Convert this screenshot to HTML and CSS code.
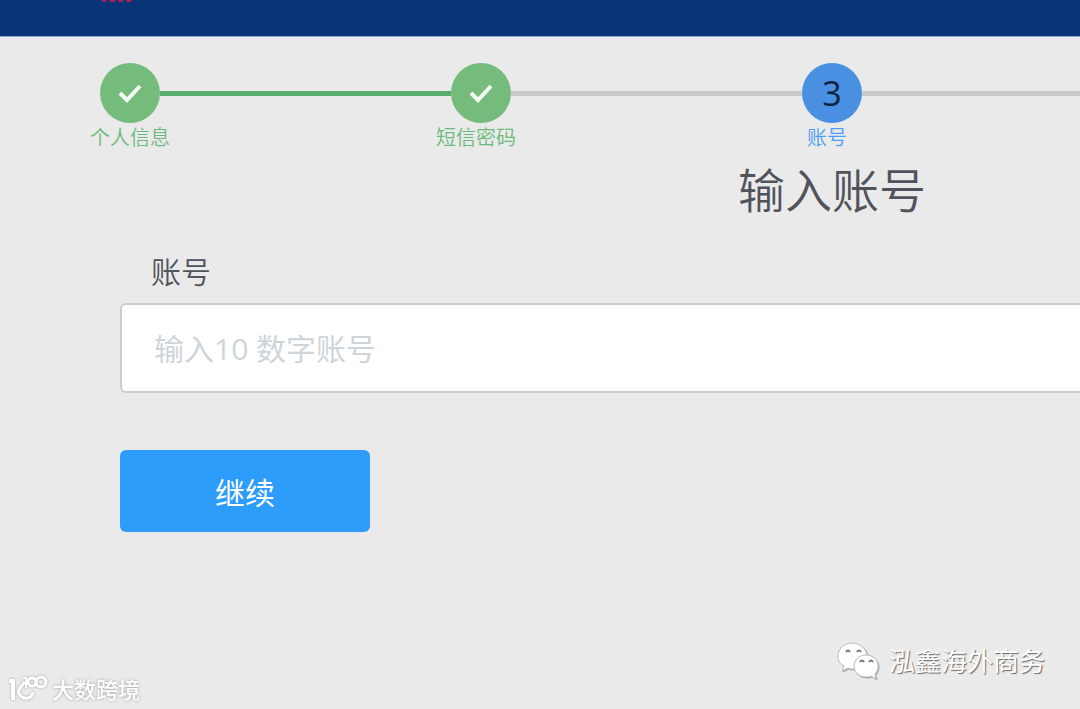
FILE: index.html
```html
<!DOCTYPE html>
<html lang="zh-CN">
<head>
    <meta charset="UTF-8">
    <meta name="viewport" content="width=device-width, initial-scale=1.0">
    <title>输入账号</title>
    <link rel="stylesheet" href="styles.css">
</head>
<body>
    <header class="topbar">
        <svg class="topbar-mark" viewBox="0 0 34 4" aria-hidden="true">
            <path d="M1 0h6l-2 2H3zM9 0h7l-2 2h-3zM18 0h6l-2 2h-3zM26 0h6l-2 2h-3z" fill="#b01f58"/>
        </svg>
    </header>

    <main class="page">
        <ol class="steps">
            <li class="step done">
                <span class="step-circle">
                    <svg class="check" viewBox="0 0 24 20" aria-hidden="true"><path d="M2 10l7 7L22 3"/></svg>
                </span>
                <span class="step-label">个人信息</span>
            </li>
            <li class="step done next-pending">
                <span class="step-circle">
                    <svg class="check" viewBox="0 0 24 20" aria-hidden="true"><path d="M2 10l7 7L22 3"/></svg>
                </span>
                <span class="step-label shifted">短信密码</span>
            </li>
            <li class="step current next-pending">
                <span class="step-circle">3</span>
                <span class="step-label shifted">账号</span>
            </li>
        </ol>

        <h1 class="title">输入账号</h1>

        <form class="account-form">
            <label class="field-label" for="account">账号</label>
            <input class="field-input" id="account" type="text" placeholder="输入10 数字账号">
            <button class="submit" type="button">继续</button>
        </form>
    </main>

    <div class="mark mark-left">
        <svg class="mark-logo" viewBox="0 0 40 28" aria-hidden="true">
            <g fill="none" stroke="#fff" stroke-width="4">
                <path d="M1 6h4v19"/>
                <path stroke-width="3" d="M17 7l-5 6q-3 4 0 7c4 5 12 4 13-3"/>
                <path stroke-width="2" d="M15 3h3v10"/>
                <circle stroke-width="3" cx="24" cy="7" r="4"/>
                <circle stroke-width="3" cx="33" cy="7" r="5"/>
            </g>
        </svg>
        <span>大数跨境</span>
    </div>

    <div class="mark mark-right">
        <svg class="wechat" viewBox="0 0 42 38" aria-hidden="true">
            <path d="M15 1C7 1 1 7 1 14c0 5 2 8 6 10l-2 5 6-3c2 1 4 1 6 1 7 0 13-6 13-13S23 1 15 1z"/>
            <path d="M29 13c-7 0-12 5-12 11s5 11 12 11c2 0 4 0 5-1l5 3-1-5c2-2 3-5 3-8 0-6-5-11-12-11z"/>
            <g class="eyes">
                <path d="M9 10q2-3 4 0M20 10q2-3 4 0M23 20q2-3 4 0M32 20q2-3 4 0"/>
            </g>
        </svg>
        <span>泓鑫海外商务</span>
    </div>
</body>
</html>
```

FILE: styles.css
```css
* {
    box-sizing: border-box;
}
body {
    font-family: "Open Sans", "Noto Sans CJK SC", sans-serif;
    font-weight: 350;
    background: #eaeaea;
    color: #50535c;
    margin: 0;
    min-height: 100vh;
    position: relative;
}
.topbar {
    height: 37px;
    padding-left: 100px;
    background: #0b3478;
    border-bottom: 1px solid #86a9d2;
}
.topbar-mark {
    display: block;
    width: 34px;
    height: 4px;
}
.page {
    padding-top: 26px;
}

/* Steps */
.steps {
    display: flex;
    list-style: none;
    margin: 0;
    padding: 0 0 0 100px;
}
.step {
    flex: 0 0 351px;
    display: grid;
    grid-template-columns: 60px 1fr;
    align-items: center;
}
.step:last-child {
    flex: 1;
}
.step::after {
    content: "";
    grid-column: 2;
    grid-row: 1;
    height: 5px;
    background: #5aae6b;
}
.step.next-pending::after {
    background: #c9c9c9;
}
.step-circle {
    display: flex;
    align-items: center;
    justify-content: center;
    width: 60px;
    height: 60px;
    border-radius: 50%;
    background: #75bb7b;
}
.check {
    width: 24px;
    height: 20px;
    fill: none;
    stroke: #f4fbf3;
    stroke-width: 4;
}
.step-label {
    grid-row: 2;
    grid-column: 1;
    justify-self: center;
    white-space: nowrap;
    font-size: 20px;
    line-height: 30px;
    color: #6cb97c;
}
.step-label.shifted {
    margin-right: 10px;
}
.current .step-circle {
    background: #4a90e2;
    color: #10233f;
    font-size: 34px;
    font-weight: 500;
}
.current .step-label {
    color: #4a9df0;
}

.title {
    margin: 0;
    padding-right: 154px;
    text-align: right;
    font-size: 47px;
    font-weight: 350;
    line-height: 74px;
}

/* Form */
.account-form {
    display: flex;
    flex-direction: column;
    align-items: flex-start;
    padding: 26px 0 0 120px;
}
.field-label {
    padding-left: 31px;
    font-size: 30px;
    line-height: 38px;
    margin-bottom: 12px;
}
.field-input {
    width: 100%;
    height: 90px;
    padding: 0 32px;
    font: inherit;
    font-size: 30px;
    font-weight: 400;
    color: #50535c;
    background: #fff;
    border: 2px solid #cdcdcd;
    border-right: 0;
    border-radius: 6px 0 0 6px;
}
.field-input::placeholder {
    color: #ced5da;
    opacity: 1;
}
.submit {
    width: 250px;
    height: 82px;
    margin-top: 57px;
    font: inherit;
    font-size: 30px;
    font-weight: 400;
    color: #fff;
    background: #2d9cfa;
    border: 0;
    border-radius: 6px;
    cursor: pointer;
}

/* Watermarks */
.mark {
    position: absolute;
    display: flex;
    align-items: center;
    color: #fff;
    font-weight: 400;
    white-space: nowrap;
}
.mark-left {
    left: 8px;
    bottom: 4px;
    gap: 4px;
    font-size: 22px;
    line-height: 32px;
    font-weight: 500;
    text-shadow: 0 0 3px #999;
}
.mark-logo {
    width: 40px;
    height: 28px;
    filter: drop-shadow(0 0 1px #999);
}
.mark-right {
    right: 35px;
    bottom: 28px;
    gap: 10px;
    font-size: 26px;
    line-height: 40px;
    text-shadow: 1px 1px 1px #666;
}
.wechat {
    width: 42px;
    height: 38px;
    fill: #fff;
    stroke: #bbb;
    stroke-width: 1;
    filter: drop-shadow(1px 1px 0 #aaa);
}
.eyes {
    fill: none;
    stroke: #777;
    stroke-width: 2;
}
```
